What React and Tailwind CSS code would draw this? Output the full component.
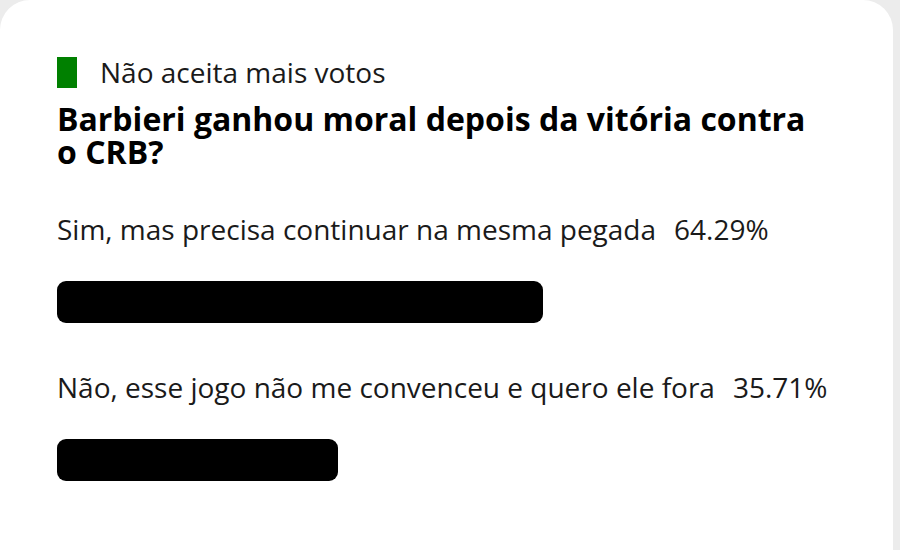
const opcoes = [
  { texto: 'Sim, mas precisa continuar na mesma pegada', pct: '64.29%', largura: 'w-[486px]' },
  { texto: 'Não, esse jogo não me convenceu e quero ele fora', pct: '35.71%', largura: 'w-[281px]' },
]

export default function App() {
  return (
    <div className="h-[550px] w-[900px] overflow-hidden bg-[#ececec] font-['Open_Sans',sans-serif]">
      <div className="h-[600px] w-[893px] rounded-t-[30px] bg-white pl-[57px] pt-[52px]">
        <div className="flex items-center gap-[23px]">
          <span className="h-[31px] w-[20px] bg-[#008000]" />
          <span className="text-[28px] leading-[40px] text-[#1a1a1a]">Não aceita mais votos</span>
        </div>
        <h2 className="mt-[10px] w-[770px] text-[32px] font-bold leading-[33px] text-black">
          Barbieri ganhou moral depois da vitória contra o CRB?
        </h2>
        <div className="mt-[44px] flex flex-col gap-[47px]">
          {opcoes.map((o, i) => (
            <div key={i}>
              <p className="text-[28px] leading-[34px] text-[#1a1a1a]">
                {o.texto}<span className="ml-[18px]">{o.pct}</span>
              </p>
              <div className={`mt-[35px] h-[42px] rounded-[9px] bg-black ${o.largura}`} />
            </div>
          ))}
        </div>
      </div>
    </div>
  )
}
